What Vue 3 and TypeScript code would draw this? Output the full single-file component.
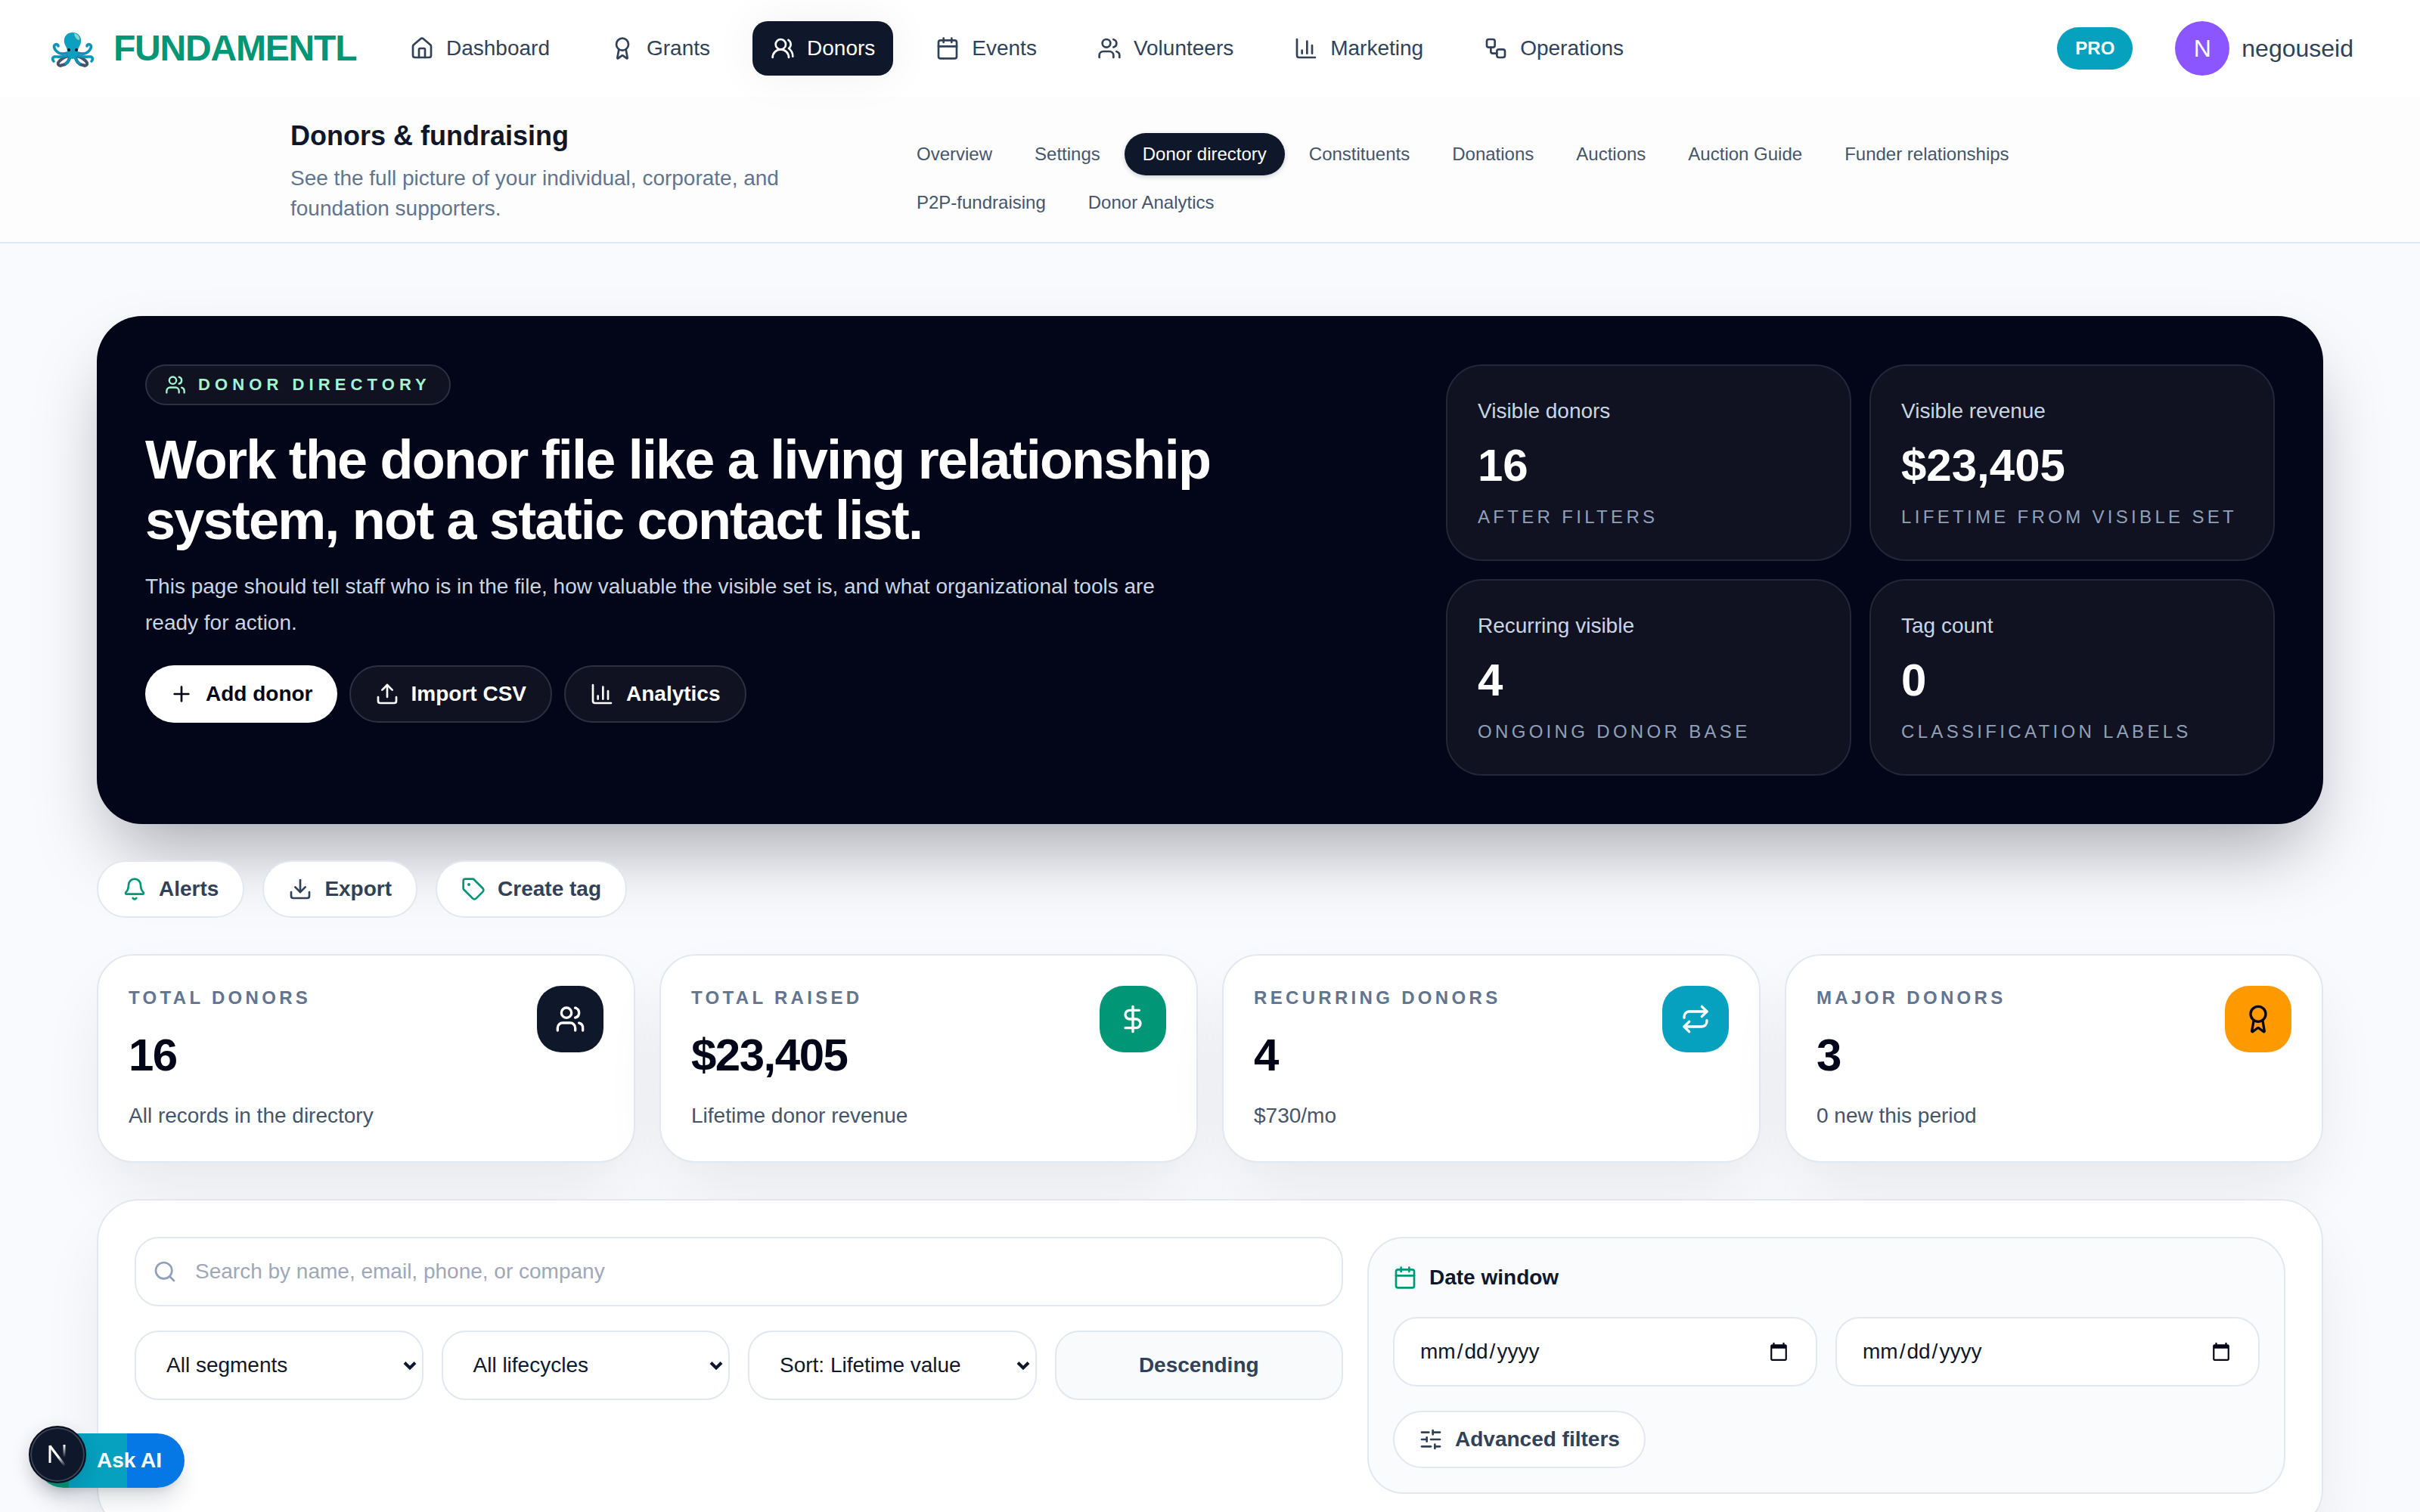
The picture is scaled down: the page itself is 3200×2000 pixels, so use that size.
<script setup lang="ts">
interface NavItem { label: string; icon: string; active?: boolean }
interface HeroStat { label: string; value: string; note: string }
interface Metric { label: string; value: string; note: string; icon: string; tone: string }

const icons: Record<string, string[]> = {
  house: [
    'M15 21v-8a1 1 0 0 0-1-1h-4a1 1 0 0 0-1 1v8',
    'M3 10a2 2 0 0 1 .709-1.528l7-5.999a2 2 0 0 1 2.582 0l7 5.999A2 2 0 0 1 21 10v9a2 2 0 0 1-2 2H5a2 2 0 0 1-2-2z',
  ],
  award: [
    'm15.477 12.89 1.515 8.526a.5.5 0 0 1-.81.47l-3.58-2.687a1 1 0 0 0-1.197 0l-3.586 2.686a.5.5 0 0 1-.81-.469l1.514-8.526',
    'M6 8a6 6 0 1 0 12 0a6 6 0 1 0-12 0',
  ],
  usersRound: [
    'M18 21a8 8 0 0 0-16 0',
    'M5 8a5 5 0 1 0 10 0a5 5 0 1 0-10 0',
    'M22 20c0-3.37-2-6.5-4-8a5 5 0 0 0-.45-8.3',
  ],
  calendar: ['M8 2v4', 'M16 2v4', 'M5 4h14a2 2 0 0 1 2 2v14a2 2 0 0 1-2 2H5a2 2 0 0 1-2-2V6a2 2 0 0 1 2-2z', 'M3 10h18'],
  users: [
    'M16 21v-2a4 4 0 0 0-4-4H6a4 4 0 0 0-4 4v2',
    'M5 7a4 4 0 1 0 8 0a4 4 0 1 0-8 0',
    'M22 21v-2a4 4 0 0 0-3-3.87',
    'M16 3.13a4 4 0 0 1 0 7.75',
  ],
  chart: ['M3 3v16a2 2 0 0 0 2 2h16', 'M18 17V9', 'M13 17V5', 'M8 17v-3'],
  workflow: [
    'M5 3h4a2 2 0 0 1 2 2v4a2 2 0 0 1-2 2H5a2 2 0 0 1-2-2V5a2 2 0 0 1 2-2z',
    'M7 11v4a2 2 0 0 0 2 2h4',
    'M15 13h4a2 2 0 0 1 2 2v4a2 2 0 0 1-2 2h-4a2 2 0 0 1-2-2v-4a2 2 0 0 1 2-2z',
  ],
  plus: ['M5 12h14', 'M12 5v14'],
  upload: ['M12 3v12', 'm17 8-5-5-5 5', 'M21 15v4a2 2 0 0 1-2 2H5a2 2 0 0 1-2-2v-4'],
  download: ['M12 15V3', 'M21 15v4a2 2 0 0 1-2 2H5a2 2 0 0 1-2-2v-4', 'm7 10 5 5 5-5'],
  bell: [
    'M10.268 21a2 2 0 0 0 3.464 0',
    'M3.262 15.326A1 1 0 0 0 4 17h16a1 1 0 0 0 .74-1.673C19.41 13.956 18 12.499 18 8A6 6 0 0 0 6 8c0 4.499-1.411 5.956-2.738 7.326',
  ],
  tag: [
    'M12.586 2.586A2 2 0 0 0 11.172 2H4a2 2 0 0 0-2 2v7.172a2 2 0 0 0 .586 1.414l8.704 8.704a2.426 2.426 0 0 0 3.42 0l6.58-6.58a2.426 2.426 0 0 0 0-3.42z',
    'M7 7.5a.5.5 0 1 0 1 0a.5.5 0 1 0-1 0',
  ],
  dollar: ['M12 2v20', 'M17 5H9.5a3.5 3.5 0 0 0 0 7h5a3.5 3.5 0 0 1 0 7H6'],
  repeat: ['m17 2 4 4-4 4', 'M3 11v-1a4 4 0 0 1 4-4h14', 'm7 22-4-4 4-4', 'M21 13v1a4 4 0 0 1-4 4H3'],
  search: ['m21 21-4.34-4.34', 'M3 11a8 8 0 1 0 16 0a8 8 0 1 0-16 0'],
  sliders: ['M10 5H3', 'M12 19H3', 'M14 3v4', 'M16 17v4', 'M21 12h-9', 'M21 19h-5', 'M21 5h-7', 'M8 10v4', 'M8 12H3'],
}

const nav: NavItem[] = [
  { label: 'Dashboard', icon: 'house' },
  { label: 'Grants', icon: 'award' },
  { label: 'Donors', icon: 'usersRound', active: true },
  { label: 'Events', icon: 'calendar' },
  { label: 'Volunteers', icon: 'users' },
  { label: 'Marketing', icon: 'chart' },
  { label: 'Operations', icon: 'workflow' },
]

const tabs: string[] = [
  'Overview', 'Settings', 'Donor directory', 'Constituents', 'Donations',
  'Auctions', 'Auction Guide', 'Funder relationships', 'P2P-fundraising', 'Donor Analytics',
]
const activeTab = 'Donor directory'

const heroStats: HeroStat[] = [
  { label: 'Visible donors', value: '16', note: 'AFTER FILTERS' },
  { label: 'Visible revenue', value: '$23,405', note: 'LIFETIME FROM VISIBLE SET' },
  { label: 'Recurring visible', value: '4', note: 'ONGOING DONOR BASE' },
  { label: 'Tag count', value: '0', note: 'CLASSIFICATION LABELS' },
]

const metrics: Metric[] = [
  { label: 'TOTAL DONORS', value: '16', note: 'All records in the directory', icon: 'users', tone: 'navy' },
  { label: 'TOTAL RAISED', value: '$23,405', note: 'Lifetime donor revenue', icon: 'dollar', tone: 'green' },
  { label: 'RECURRING DONORS', value: '4', note: '$730/mo', icon: 'repeat', tone: 'cyan' },
  { label: 'MAJOR DONORS', value: '3', note: '0 new this period', icon: 'award', tone: 'amber' },
]

const selects: string[] = ['All segments', 'All lifecycles', 'Sort: Lifetime value']
</script>

<template>
  <div class="page">
    <header class="topbar">
      <div class="brand">
        <svg class="octopus" viewBox="0 0 64 64" fill="none" stroke-linecap="round">
          <g stroke="#45556c" stroke-width="4">
            <path d="M26 42c-6 2-10 4-13 9-1 3 2 5 5 3" />
            <path d="M38 42c6 2 10 4 13 9 1 3-2 5-5 3" />
            <path d="M28 44c-1 5-4 9-9 10" />
            <path d="M36 44c1 5 4 9 9 10" />
          </g>
          <g stroke="#0b93b8" stroke-width="3.6">
            <path d="M25 38c-6 2-11 1-14-2-3-3-5-7-2-9 2-1 4 0 4 2" />
            <path d="M39 38c6 2 11 1 14-2 3-3 5-7 2-9-2-1-4 0-4 2" />
            <path d="M26 41c-6 3-13 2-18 2-3 1-3 4-1 6" />
            <path d="M38 41c6 3 13 2 18 2 3 1 3 4 1 6" />
            <path d="M29 43c-1 4-3 7-6 9" />
            <path d="M35 43c1 4 3 7 6 9" />
          </g>
          <path d="M32 11c-8 0-12 6-11 13 1 5 4 7 4 12 0 6 2 10 7 10s7-4 7-10c0-5 3-7 4-12 1-7-3-13-11-13z" fill="#0d9fc0" />
          <path d="M34 12c5 1 8 5 7 9-3 0-6-3-7-9z" fill="#7fdcc4" />
          <circle cx="27" cy="34" r="2" fill="#0f172b" />
          <circle cx="37" cy="34" r="2" fill="#0f172b" />
        </svg>
        <span class="brand-name">FUNDAMENTL</span>
      </div>
      <nav class="nav">
        <a v-for="item in nav" :key="item.label" class="nav-item" :class="{ active: item.active }">
          <svg class="icon" viewBox="0 0 24 24"><path v-for="d in icons[item.icon]" :key="d" :d="d" /></svg>
          <span>{{ item.label }}</span>
        </a>
      </nav>
      <div class="account">
        <span class="plan">PRO</span>
        <span class="avatar">N</span>
        <span class="user">negouseid</span>
      </div>
    </header>

    <section class="subbar">
      <div class="subbar-text">
        <h2>Donors &amp; fundraising</h2>
        <p>See the full picture of your individual, corporate, and foundation supporters.</p>
      </div>
      <div class="tabs">
        <a v-for="tab in tabs" :key="tab" class="tab" :class="{ active: tab === activeTab }">{{ tab }}</a>
      </div>
    </section>

    <main class="content">
      <section class="hero">
        <div class="hero-copy">
          <span class="badge">
            <svg class="icon small" viewBox="0 0 24 24"><path v-for="d in icons.users" :key="d" :d="d" /></svg>
            <span>DONOR DIRECTORY</span>
          </span>
          <h1>Work the donor file like a living relationship system, not a static contact list.</h1>
          <p>This page should tell staff who is in the file, how valuable the visible set is, and what organizational tools are ready for action.</p>
          <div class="hero-actions">
            <button class="btn solid">
              <svg class="icon" viewBox="0 0 24 24"><path v-for="d in icons.plus" :key="d" :d="d" /></svg>Add donor
            </button>
            <button class="btn ghost">
              <svg class="icon" viewBox="0 0 24 24"><path v-for="d in icons.upload" :key="d" :d="d" /></svg>Import CSV
            </button>
            <button class="btn ghost">
              <svg class="icon" viewBox="0 0 24 24"><path v-for="d in icons.chart" :key="d" :d="d" /></svg>Analytics
            </button>
          </div>
        </div>
        <div class="hero-stats">
          <div v-for="s in heroStats" :key="s.label" class="hero-stat">
            <div class="hs-label">{{ s.label }}</div>
            <div class="hs-value">{{ s.value }}</div>
            <div class="hs-note">{{ s.note }}</div>
          </div>
        </div>
      </section>

      <div class="quick">
        <button class="btn light accent">
          <svg class="icon" viewBox="0 0 24 24"><path v-for="d in icons.bell" :key="d" :d="d" /></svg>Alerts
        </button>
        <button class="btn light">
          <svg class="icon" viewBox="0 0 24 24"><path v-for="d in icons.download" :key="d" :d="d" /></svg>Export
        </button>
        <button class="btn light accent">
          <svg class="icon" viewBox="0 0 24 24"><path v-for="d in icons.tag" :key="d" :d="d" /></svg>Create tag
        </button>
      </div>

      <section class="metrics">
        <article v-for="m in metrics" :key="m.label" class="metric">
          <div>
            <div class="m-label">{{ m.label }}</div>
            <div class="m-value">{{ m.value }}</div>
            <div class="m-note">{{ m.note }}</div>
          </div>
          <span class="m-icon" :class="m.tone">
            <svg class="icon large" viewBox="0 0 24 24"><path v-for="d in icons[m.icon]" :key="d" :d="d" /></svg>
          </span>
        </article>
      </section>

      <section class="filters">
        <div class="filters-main">
          <div class="field search">
            <svg class="icon" viewBox="0 0 24 24"><path v-for="d in icons.search" :key="d" :d="d" /></svg>
            <span>Search by name, email, phone, or company</span>
          </div>
          <div class="select-row">
            <div v-for="s in selects" :key="s" class="field select">
              <span>{{ s }}</span>
              <svg class="chevron" viewBox="0 0 20 14"><path d="M3 3.5l7 7 7-7" /></svg>
            </div>
            <button class="field order">Descending</button>
          </div>
        </div>
        <div class="dates">
          <div class="dates-title">
            <svg class="icon" viewBox="0 0 24 24"><path v-for="d in icons.calendar" :key="d" :d="d" /></svg>
            <span>Date window</span>
          </div>
          <div class="date-row">
            <div v-for="n in 2" :key="n" class="field date">
              <span class="mask"><i>mm</i>/<i>dd</i>/<i>yyyy</i></span>
              <svg class="picker" viewBox="0 0 24 24">
                <path d="M20 3h-1V1h-2v2H7V1H5v2H4c-1.1 0-2 .9-2 2v16c0 1.1.9 2 2 2h16c1.1 0 2-.9 2-2V5c0-1.1-.9-2-2-2zm0 18H4V8h16v13z" />
              </svg>
            </div>
          </div>
          <button class="btn light advanced">
            <svg class="icon" viewBox="0 0 24 24"><path v-for="d in icons.sliders" :key="d" :d="d" /></svg>Advanced filters
          </button>
        </div>
      </section>
    </main>

    <button class="ask">Ask AI</button>
    <span class="dev-badge">
      <svg viewBox="0 0 40 40" fill="none">
        <defs>
          <linearGradient id="diag" x1="22" y1="22" x2="31" y2="34" gradientUnits="userSpaceOnUse">
            <stop offset="0" stop-color="#fff" />
            <stop offset="1" stop-color="#fff" stop-opacity="0" />
          </linearGradient>
          <linearGradient id="stem" x1="28" y1="7" x2="28" y2="24" gradientUnits="userSpaceOnUse">
            <stop offset="0" stop-color="#fff" />
            <stop offset="1" stop-color="#fff" stop-opacity="0" />
          </linearGradient>
        </defs>
        <path d="M10 31V8" stroke="#fff" stroke-width="3" />
        <path d="M10 8.5 30 35" stroke="url(#diag)" stroke-width="3.2" />
        <path d="M29 7v17" stroke="url(#stem)" stroke-width="3" />
      </svg>
    </span>
  </div>
</template>

<style>
html,
body {
  margin: 0;
  background: #f8fafc;
}
</style>

<style scoped>
.page {
  position: relative;
  width: 3200px;
  height: 2000px;
  overflow: hidden;
  background: #f9fafd;
  color: #0f172b;
  font-family: "Liberation Sans", Arial, Helvetica, sans-serif;
  font-size: 28px;
  line-height: 40px;
}
.page * {
  box-sizing: border-box;
}
h1,
h2,
p {
  margin: 0;
}
button {
  font: inherit;
  color: inherit;
}
.icon {
  flex: none;
  width: 32px;
  height: 32px;
  fill: none;
  stroke: currentColor;
  stroke-width: 2;
  stroke-linecap: round;
  stroke-linejoin: round;
}
.icon.small {
  width: 28px;
  height: 28px;
}
.icon.large {
  width: 40px;
  height: 40px;
}

.topbar {
  display: flex;
  align-items: center;
  height: 128px;
  padding: 0 88px 0 64px;
  background: #fff;
}
.brand {
  display: flex;
  align-items: center;
  gap: 22px;
  width: 454px;
}
.octopus {
  width: 64px;
  height: 64px;
}
.brand-name {
  font-size: 48px;
  line-height: 64px;
  font-weight: 700;
  letter-spacing: -1.2px;
  color: #009676;
}
.nav {
  display: flex;
  gap: 32px;
}
.nav-item {
  display: flex;
  align-items: center;
  gap: 16px;
  height: 72px;
  padding: 0 24px;
  border-radius: 20px;
  color: #314158;
}
.nav-item.active {
  background: #0f172b;
  color: #fff;
  box-shadow: 0 0 60px rgba(15, 23, 43, 0.06);
}
.account {
  display: flex;
  align-items: center;
  margin-left: auto;
}
.plan {
  height: 56px;
  padding: 0 24px;
  border-radius: 28px;
  background: #05a1bf;
  color: #fff;
  font-size: 24px;
  font-weight: 700;
  line-height: 56px;
}
.avatar {
  width: 72px;
  height: 72px;
  margin: 0 16px 0 56px;
  border-radius: 50%;
  background: #8b56ff;
  color: #fff;
  font-size: 32px;
  line-height: 72px;
  text-align: center;
}
.user {
  font-size: 32px;
  color: #314158;
}

.subbar {
  display: flex;
  align-items: flex-end;
  gap: 32px;
  height: 194px;
  padding: 24px 384px;
  border-bottom: 2px solid #e2e8f0;
  background: #fdfdfe;
}
.subbar-text {
  flex: none;
  width: 772px;
}
.subbar-text h2 {
  font-size: 36px;
  line-height: 56px;
}
.subbar-text p {
  margin-top: 8px;
  max-width: 700px;
  color: #62748e;
}
.tabs {
  display: flex;
  flex-wrap: wrap;
  gap: 8px;
}
.tab {
  height: 56px;
  padding: 0 24px;
  border-radius: 28px;
  color: #45556c;
  font-size: 24px;
  line-height: 56px;
}
.tab.active {
  background: #0f172b;
  color: #fff;
  box-shadow: 0 2px 6px rgba(15, 23, 43, 0.2);
}

.content {
  display: flex;
  flex-direction: column;
  gap: 48px;
  padding: 96px 128px 0;
}
.hero {
  display: flex;
  justify-content: space-between;
  height: 672px;
  padding: 64px;
  border-radius: 60px;
  background: #020618;
  color: #fff;
  box-shadow: 0 50px 100px -24px rgba(2, 6, 24, 0.36);
}
.badge {
  display: inline-flex;
  align-items: center;
  gap: 16px;
  height: 54px;
  padding: 0 24px;
  border: 2px solid #2c3040;
  border-radius: 27px;
  background: #101222;
  color: #a4f4cf;
  font-size: 22px;
  font-weight: 700;
  letter-spacing: 6.1px;
  vertical-align: top;
}
.hero h1 {
  width: 1536px;
  margin-top: 32px;
  font-size: 72px;
  line-height: 80px;
  letter-spacing: -1.8px;
}
.hero p {
  width: 1344px;
  margin-top: 24px;
  line-height: 48px;
  color: #cad5e2;
}
.hero-actions {
  display: flex;
  gap: 16px;
  margin-top: 32px;
}
.btn {
  display: flex;
  align-items: center;
  gap: 16px;
  height: 76px;
  padding: 0 32px;
  border: 2px solid #e2e8f0;
  border-radius: 38px;
  font-weight: 700;
}
.btn.solid {
  border: 0;
  background: #fff;
  color: #020618;
}
.btn.ghost {
  border-color: #2c3040;
  background: #101222;
}
.btn.light {
  background: #fff;
  color: #314158;
}
.btn.accent .icon {
  color: #009676;
}
.hero-stats {
  display: grid;
  grid-template-columns: 536px 536px;
  grid-auto-rows: 260px;
  gap: 24px;
}
.hero-stat {
  padding: 40px;
  border: 2px solid #242737;
  border-radius: 48px;
  background: #101222;
}
.hs-label {
  color: #cad5e2;
}
.hs-value {
  margin-top: 16px;
  font-size: 60px;
  line-height: 72px;
  font-weight: 700;
}
.hs-note {
  margin-top: 16px;
  color: #90a1b9;
  font-size: 24px;
  line-height: 32px;
  letter-spacing: 4.32px;
  white-space: nowrap;
}

.quick {
  display: flex;
  gap: 24px;
}
.metrics {
  display: grid;
  grid-template-columns: repeat(4, 1fr);
  gap: 32px;
}
.metric {
  display: flex;
  justify-content: space-between;
  align-items: flex-start;
  height: 276px;
  padding: 40px;
  border: 2px solid #e2e8f0;
  border-radius: 48px;
  background: #fff;
  box-shadow: 0 40px 90px -16px rgba(15, 23, 43, 0.09);
}
.m-label {
  color: #62748e;
  font-size: 24px;
  line-height: 32px;
  font-weight: 700;
  letter-spacing: 4.32px;
}
.m-value {
  margin-top: 24px;
  color: #020618;
  font-size: 60px;
  line-height: 72px;
  font-weight: 700;
  letter-spacing: -1.5px;
}
.m-note {
  margin-top: 24px;
  color: #45556c;
}
.m-icon {
  display: flex;
  align-items: center;
  justify-content: center;
  width: 88px;
  height: 88px;
  border-radius: 32px;
  color: #fff;
}
.m-icon.navy {
  background: #0f172b;
}
.m-icon.green {
  background: #009676;
}
.m-icon.cyan {
  background: #05a1bf;
}
.m-icon.amber {
  background: #fe9a00;
  color: #020618;
}

.filters {
  display: flex;
  gap: 32px;
  height: 440px;
  flex: none;
  padding: 48px;
  border: 2px solid #e2e8f0;
  border-radius: 56px;
  background: #fff;
  box-shadow: 0 40px 90px -16px rgba(15, 23, 43, 0.09);
}
.filters-main {
  display: flex;
  flex-direction: column;
  gap: 32px;
  width: 1598px;
}
.field {
  display: flex;
  align-items: center;
  height: 92px;
  border: 2px solid #e2e8f0;
  border-radius: 32px;
  background: #fff;
}
.search {
  gap: 24px;
  padding: 0 22px;
  color: #9fa8b7;
}
.search .icon {
  color: #90a1b9;
}
.select-row {
  display: grid;
  grid-template-columns: repeat(4, 1fr);
  gap: 24px;
}
.select {
  justify-content: space-between;
  padding: 0 6px 0 40px;
}
.chevron {
  width: 20px;
  height: 14px;
  fill: none;
  stroke: #0f172b;
  stroke-width: 4;
}
.order {
  justify-content: center;
  background: #f8fafc;
  color: #314158;
  font-weight: 700;
}
.dates {
  display: flex;
  flex-direction: column;
  align-items: flex-start;
  gap: 32px;
  flex: 1;
  padding: 32px;
  border: 2px solid #e2e8f0;
  border-radius: 48px;
  background: #fafbfd;
}
.dates-title {
  display: flex;
  align-items: center;
  gap: 16px;
  font-weight: 700;
}
.dates-title .icon {
  color: #009676;
}
.date-row {
  display: grid;
  grid-template-columns: 1fr 1fr;
  gap: 24px;
  width: 100%;
}
.date {
  justify-content: space-between;
  padding: 0 36px 0 32px;
}
.mask i {
  padding: 0 2px;
  font-style: normal;
}
.picker {
  width: 26px;
  height: 26px;
  fill: #020618;
}

.ask {
  position: absolute;
  left: 48px;
  bottom: 32px;
  height: 72px;
  padding: 0 30px 0 80px;
  border: 0;
  border-radius: 36px;
  background: linear-gradient(90deg, #009676 0 43px, #05a1bf 43px 120px, #0578e6 120px);
  color: #fff;
  font-weight: 700;
  box-shadow: 0 20px 30px -6px rgba(15, 23, 43, 0.16), 0 8px 12px -8px rgba(15, 23, 43, 0.16);
}
.dev-badge {
  position: absolute;
  left: 38px;
  bottom: 38px;
  display: flex;
  align-items: center;
  justify-content: center;
  width: 76px;
  height: 76px;
  border: 2px solid #0a0f1e;
  border-radius: 50%;
  background: #0f172b;
  box-shadow: inset 0 0 0 2px #3a4256, 0 8px 24px rgba(15, 23, 43, 0.18);
}
.dev-badge svg {
  width: 40px;
  height: 40px;
}
</style>
